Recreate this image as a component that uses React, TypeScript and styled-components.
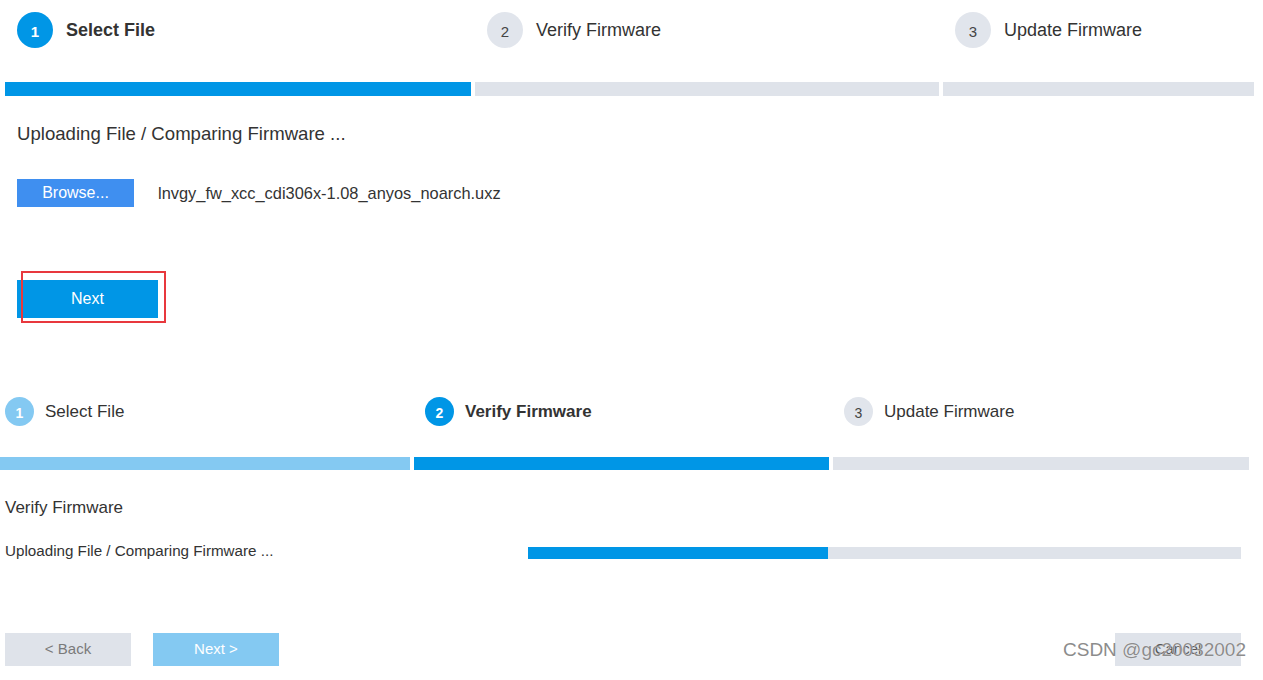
import React from 'react';
import styled, { createGlobalStyle, css } from 'styled-components';

const BLUE = '#0096e6';
const LIGHT_BLUE = '#84c9f2';
const GRAY = '#dfe3ea';
const TEXT = '#333';

const GlobalStyle = createGlobalStyle`
  html, body {
    margin: 0;
    padding: 0;
    background: #fff;
  }
  body {
    font-family: "Liberation Sans", Arial, sans-serif;
    color: ${TEXT};
  }
`;

const Page = styled.div`
  position: relative;
  width: 1263px;
  height: 680px;
  overflow: hidden;
`;

type StepState = 'done' | 'active' | 'todo';

const StepGrid = styled.div<{ $cols: string; $compact?: boolean }>`
  display: grid;
  grid-template-columns: ${({ $cols }) => $cols};
  column-gap: 4px;
  ${({ $compact }) =>
    $compact
      ? css`
          margin-top: 79px;
        `
      : css`
          padding: 12px 0 0 5px;
        `}
`;

const StepCol = styled.div<{ $compact?: boolean }>`
  display: flex;
  flex-direction: column;
  gap: ${({ $compact }) => ($compact ? '31px' : '34px')};
`;

const Step = styled.div<{ $indent: number; $compact?: boolean }>`
  display: flex;
  align-items: center;
  gap: ${({ $compact }) => ($compact ? '11px' : '13px')};
  padding-left: ${({ $indent }) => $indent}px;
`;

const Circle = styled.span<{ $state: StepState; $compact?: boolean }>`
  display: flex;
  align-items: center;
  justify-content: center;
  flex: none;
  box-sizing: border-box;
  padding-top: 2px;
  width: ${({ $compact }) => ($compact ? '29px' : '36px')};
  height: ${({ $compact }) => ($compact ? '29px' : '36px')};
  border-radius: 50%;
  font-size: ${({ $compact }) => ($compact ? '14px' : '15px')};
  ${({ $state }) =>
    $state === 'active'
      ? css`
          background: ${BLUE};
          color: #fff;
          font-weight: bold;
        `
      : $state === 'done'
      ? css`
          background: ${LIGHT_BLUE};
          color: #fff;
          font-weight: bold;
        `
      : css`
          background: #e1e5ec;
          color: #444;
        `}
`;

const StepLabel = styled.span<{ $state: StepState; $compact?: boolean }>`
  font-size: ${({ $compact }) => ($compact ? '17px' : '18px')};
  font-weight: ${({ $state }) => ($state === 'active' ? 'bold' : 'normal')};
  color: ${TEXT};
`;

const Bar = styled.div<{ $state: StepState; $compact?: boolean }>`
  height: ${({ $compact }) => ($compact ? '13px' : '14px')};
  background: ${({ $state }) =>
    $state === 'active' ? BLUE : $state === 'done' ? LIGHT_BLUE : GRAY};
`;

const Content = styled.div`
  padding-left: 17px;
`;

const Heading = styled.div`
  margin-top: 27px;
  font-size: 18.6px;
  line-height: 22px;
`;

const FileRow = styled.div`
  display: flex;
  align-items: center;
  gap: 24px;
  margin-top: 34px;
`;

const BrowseButton = styled.button`
  width: 117px;
  height: 28px;
  border: none;
  padding: 0;
  background: #3f8ff0;
  color: #fff;
  font-family: inherit;
  font-size: 16px;
`;

const FileName = styled.span`
  font-size: 16.4px;
`;

const NextWrap = styled.div`
  position: relative;
  width: 141px;
  margin-top: 73px;
`;

const PrimaryButton = styled.button`
  display: block;
  width: 141px;
  height: 38px;
  border: none;
  padding: 0;
  background: ${BLUE};
  color: #fff;
  font-family: inherit;
  font-size: 16px;
`;

const Highlight = styled.div`
  position: absolute;
  left: 4px;
  top: -9px;
  width: 145px;
  height: 52px;
  box-sizing: border-box;
  border: 2px solid #e8383d;
`;

const SubHeading = styled.div`
  margin-top: 28px;
  padding-left: 5px;
  font-size: 17px;
  line-height: 20px;
`;

const ProgressRow = styled.div`
  display: grid;
  grid-template-columns: 523px 713px;
  align-items: center;
  margin-top: 23px;
  padding-left: 5px;
  font-size: 15.2px;
  line-height: 20px;
`;

const Track = styled.div`
  height: 12px;
  margin-top: 4px;
  background: ${GRAY};
`;

const Fill = styled.div`
  height: 100%;
  background: ${BLUE};
`;

const Footer = styled.div`
  display: flex;
  gap: 22px;
  margin-top: 72px;
  padding: 0 22px 0 5px;
`;

const FooterButton = styled.button<{ $variant: 'gray' | 'light'; $push?: boolean }>`
  width: 126px;
  height: 33px;
  border: none;
  padding: 0 0 2px;
  font-family: inherit;
  font-size: 15px;
  background: ${({ $variant }) => ($variant === 'light' ? LIGHT_BLUE : GRAY)};
  color: ${({ $variant }) => ($variant === 'light' ? '#fff' : '#7a7a7a')};
  ${({ $push }) =>
    $push &&
    css`
      margin-left: auto;
      color: #555;
    `}
`;

const Watermark = styled.div`
  position: absolute;
  right: 17px;
  top: 639px;
  font-size: 19px;
  color: #8c8c8c;
  text-shadow: 0 0 1px #fff;
  pointer-events: none;
`;

type StepDef = { n: number; label: string; state: StepState; indent: number };

const topSteps: StepDef[] = [
  { n: 1, label: 'Select File', state: 'active', indent: 12 },
  { n: 2, label: 'Verify Firmware', state: 'todo', indent: 12 },
  { n: 3, label: 'Update Firmware', state: 'todo', indent: 12 },
];

const bottomSteps: StepDef[] = [
  { n: 1, label: 'Select File', state: 'done', indent: 5 },
  { n: 2, label: 'Verify Firmware', state: 'active', indent: 11 },
  { n: 3, label: 'Update Firmware', state: 'todo', indent: 11 },
];

const Stepper = ({ steps, cols, compact }: { steps: StepDef[]; cols: string; compact?: boolean }) => (
  <StepGrid $cols={cols} $compact={compact}>
    {steps.map((s) => (
      <StepCol key={s.n} $compact={compact}>
        <Step $indent={s.indent} $compact={compact}>
          <Circle $state={s.state} $compact={compact}>
            {s.n}
          </Circle>
          <StepLabel $state={s.state} $compact={compact}>
            {s.label}
          </StepLabel>
        </Step>
        <Bar $state={s.state} $compact={compact} />
      </StepCol>
    ))}
  </StepGrid>
);

export default function App() {
  const progress = 300 / 713;
  return (
    <Page>
      <GlobalStyle />
      <Stepper steps={topSteps} cols="466px 464px 311px" />
      <Content>
        <Heading>Uploading File / Comparing Firmware ...</Heading>
        <FileRow>
          <BrowseButton>Browse...</BrowseButton>
          <FileName>lnvgy_fw_xcc_cdi306x-1.08_anyos_noarch.uxz</FileName>
        </FileRow>
        <NextWrap>
          <PrimaryButton>Next</PrimaryButton>
          <Highlight />
        </NextWrap>
      </Content>

      <Stepper steps={bottomSteps} cols="410px 415px 416px" compact />
      <SubHeading>Verify Firmware</SubHeading>
      <ProgressRow>
        <span>Uploading File / Comparing Firmware ...</span>
        <Track>
          <Fill style={{ width: `${progress * 100}%` }} />
        </Track>
      </ProgressRow>
      <Footer>
        <FooterButton $variant="gray">&lt; Back</FooterButton>
        <FooterButton $variant="light">Next &gt;</FooterButton>
        <FooterButton $variant="gray" $push>
          Cancel
        </FooterButton>
      </Footer>
      <Watermark>CSDN @gc20032002</Watermark>
    </Page>
  );
}
